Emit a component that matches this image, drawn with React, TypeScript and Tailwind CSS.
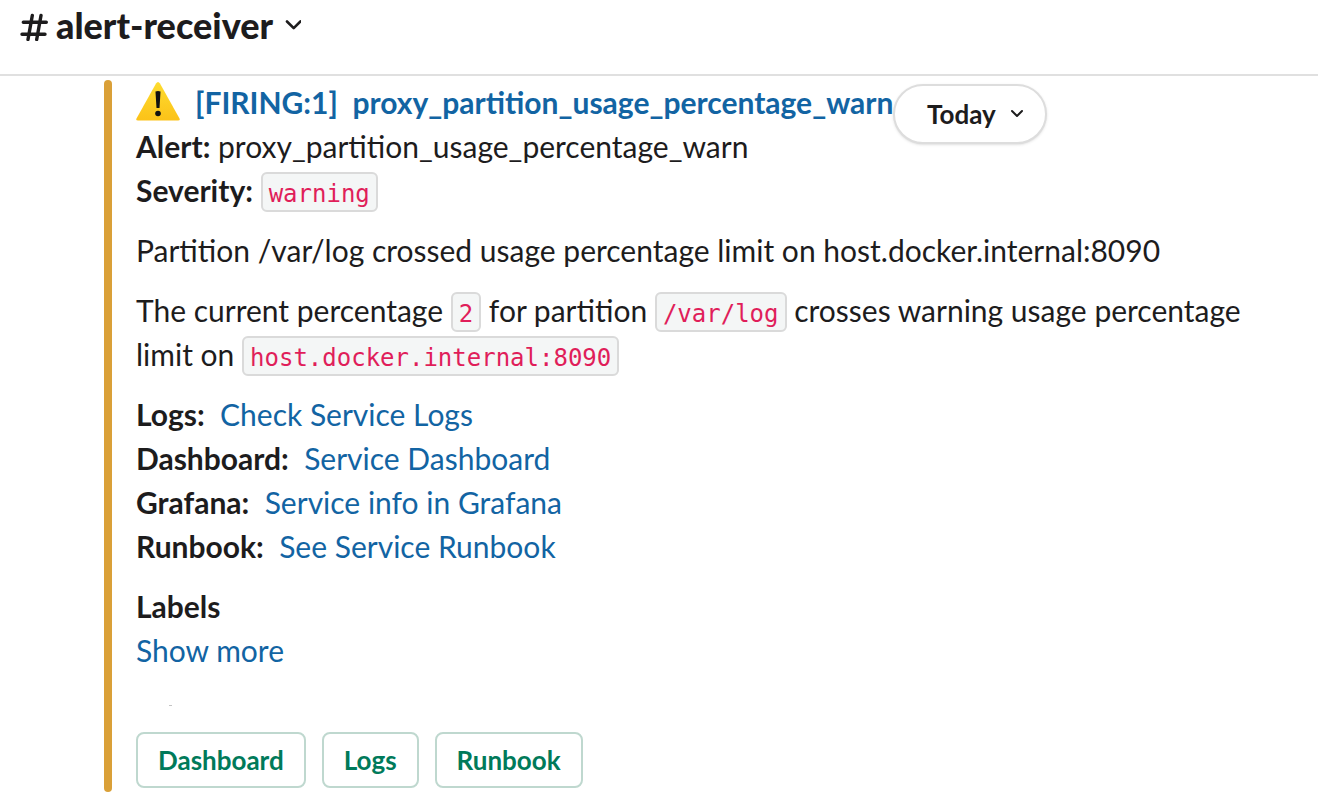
import React from "react";

function Code({ children }: { children: React.ReactNode }) {
  return (
    <code className="rounded-md border-2 border-[#dadada] bg-[#f4f6f6] px-1.5 pt-1.5 pb-0.5 font-['DejaVu_Sans_Mono',monospace] text-2xl leading-none text-[#e01e5a]">
      {children}
    </code>
  );
}

const links = [
  { label: "Logs:", text: "Check Service Logs" },
  { label: "Dashboard:", text: "Service Dashboard" },
  { label: "Grafana:", text: "Service info in Grafana" },
  { label: "Runbook:", text: "See Service Runbook" },
];

export default function App() {
  return (
    <div className="min-h-screen bg-white font-[Lato,sans-serif] text-[30px] leading-11 text-[#1d1c1d]">
      <header className="flex h-[76px] items-start border-b-2 border-[#e0e0e0] px-5 pt-[3px]">
        <button type="button" className="flex items-center gap-2 text-4xl leading-11 font-black">
          <svg width="28" height="32" viewBox="0 0 28 32" fill="none" stroke="currentColor" strokeWidth="3.4" strokeLinecap="round">
            <path d="M12.300 6.500 8 30.500M21 6.500 16.700 30.500M3.300 13.300h23M2 25.300h23" />
          </svg>
          <span>alert-receiver</span>
          <svg width="20" height="12" viewBox="0 0 20 12" fill="none" stroke="currentColor" strokeWidth="2.6" strokeLinecap="round" strokeLinejoin="round">
            <path d="m6 2.500 6.700 6.700 6.700-6.700" />
          </svg>
        </button>
      </header>
      <main className="relative pt-1 pr-16 pl-[104px]">
        <article className="flex gap-6">
          <div className="w-2 shrink-0 rounded-full bg-[#daa038]" />
          <div className="pb-1">
            <h1 className="flex items-center font-bold">
              <svg className="mr-[15px] shrink-0" width="44" height="40" viewBox="0 0 44 40">
                <defs>
                  <linearGradient id="sign" x1="0" y1="0" x2="0" y2="1">
                    <stop offset="0" stopColor="#fddc30" />
                    <stop offset="1" stopColor="#fcc218" />
                  </linearGradient>
                </defs>
                <path d="M20 1.500q2-3 4 0l19.500 35q1 2-1.500 2H2q-2.500 0-1.500-2z" fill="url(#sign)" />
                <path d="M19.500 9.500q2.500-1.200 5 0l-1 16.500h-3z" fill="#111" />
                <circle cx="22" cy="31.500" r="2.800" fill="#111" />
              </svg>
              <a href="#alert" className="whitespace-pre text-[#1264a3]">{"[FIRING:1]  proxy_partition_usage_percentage_warn"}</a>
            </h1>
            <p><strong>Alert:</strong> proxy_partition_usage_percentage_warn</p>
            <p><strong>Severity:</strong> <Code>warning</Code></p>
            <p className="mt-4">Partition /var/log crossed usage percentage limit on host.docker.internal:8090</p>
            <p className="mt-4">
              The current percentage <Code>2</Code> for partition <Code>/var/log</Code> crosses warning usage percentage limit on <Code>host.docker.internal:8090</Code>
            </p>
            <div className="mt-4">
              {links.map((l) => (
                <p key={l.label} className="whitespace-pre-wrap"><strong>{l.label}</strong>{"  "}<a href="#service" className="text-[#1264a3]">{l.text}</a></p>
              ))}
            </div>
            <p className="mt-4 font-bold">Labels</p>
            <button type="button" className="block text-[#1264a3]">Show more</button>
            <div className="mt-[33px] h-px pl-[33px]">
              <div className="h-px w-[3px] bg-[#c4c4c4]" />
            </div>
            <div className="mt-[26px] flex gap-4 text-[26px] font-bold text-[#007a5a]">
              {["Dashboard", "Logs", "Runbook"].map((b) => (
                <button key={b} type="button" className="h-14 rounded-lg border-2 border-[#bfd8cf] px-5">{b}</button>
              ))}
            </div>
          </div>
        </article>
        <button type="button" className="absolute top-2 left-[893px] flex h-15 items-center gap-3.5 rounded-full border-2 border-[#dddddd] bg-white pr-[21px] pl-8 text-[26px] font-bold shadow-sm">
          Today
          <svg width="14" height="10" viewBox="0 0 14 10" fill="none" stroke="currentColor" strokeWidth="2" strokeLinecap="round" strokeLinejoin="round"><path d="m2 2 5 5 5-5" /></svg>
        </button>
      </main>
    </div>
  );
}
